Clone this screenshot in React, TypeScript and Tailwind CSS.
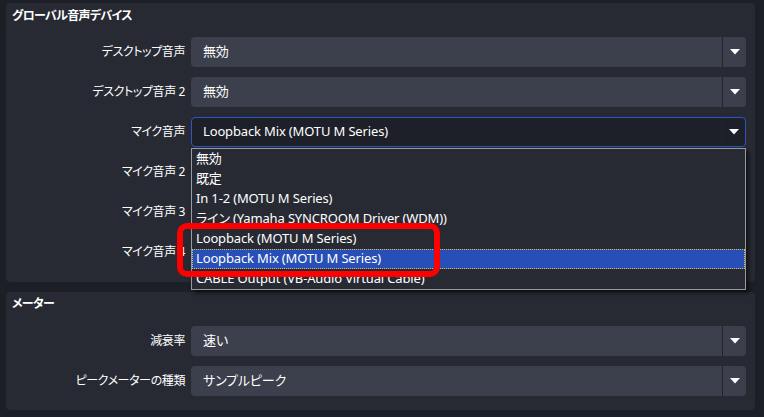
import React from 'react';

const font = "font-['Noto_Sans','Noto_Sans_CJK_JP',sans-serif] [font-feature-settings:'palt']";

interface ComboProps {
  value: string;
  focused?: boolean;
}

const Arrow = () => (
  <svg width="10" height="6" viewBox="0 0 10 6" className="block">
    <path d="M0 0 H10 L5 5.5 Z" fill="#ffffff" />
  </svg>
);

const Combo: React.FC<ComboProps> = ({ value, focused }) => (
  <div
    className={`h-[30px] flex rounded-[4px] ${
      focused ? 'bg-[#1e2029] border border-[#2d56c4]' : 'bg-[#3c404c]'
    }`}
  >
    <div className={`flex-1 flex items-center ${focused ? 'pl-[11px]' : 'pl-[12px]'} text-white`}>{value}</div>
    <div className="w-[24px] flex items-center justify-center border-l border-[#22242c]">
      <Arrow />
    </div>
  </div>
);

const Row: React.FC<{ label: string; value: string; focused?: boolean }> = ({ label, value, focused }) => (
  <div className="flex items-center h-[30px]">
    <div className="w-[185px] pr-[6px] text-right text-white whitespace-nowrap text-[12px] tracking-[-0.4px]">{label}</div>
    <div className="flex-1 pr-[9px]">
      <Combo value={value} focused={focused} />
    </div>
  </div>
);

const items = [
  '無効',
  '既定',
  'In 1-2 (MOTU M Series)',
  'ライン (Yamaha SYNCROOM Driver (WDM))',
  'Loopback (MOTU M Series)',
  'Loopback Mix (MOTU M Series)',
  'CABLE Output (VB-Audio Virtual Cable)',
];

export default function App() {
  return (
    <div className={`w-[764px] h-[417px] bg-[#1d1f26] overflow-hidden relative text-[13px] tracking-[-0.15px] ${font}`}>
      <div className="pl-[6px] pr-[9px] pt-[3px] flex flex-col gap-[10px]">
        {/* グローバル音声デバイス */}
        <div className="bg-[#272a33] rounded-[4px] h-[279px] flex flex-col">
          <div className="h-[26px] pl-[6px] flex items-center text-white font-semibold text-[12px] tracking-[-0.7px]">グローバル音声デバイス</div>
          <div className="mt-[8px] flex flex-col gap-[10px]">
            <Row label="デスクトップ音声" value="無効" />
            <Row label="デスクトップ音声 2" value="無効" />
            <Row label="マイク音声" value="Loopback Mix (MOTU M Series)" focused />
            {/* these three sit under the open list, their values are hidden */}
            <Row label="マイク音声 2" value="" />
            <Row label="マイク音声 3" value="" />
            <Row label="マイク音声 4" value="" />
          </div>
        </div>

        {/* メーター */}
        <div className="bg-[#272a33] rounded-[4px] h-[118px] flex flex-col">
          <div className="h-[24px] pl-[6px] flex items-center text-white font-semibold text-[12px] tracking-[-0.7px]">メーター</div>
          <div className="mt-[10px] flex flex-col gap-[10px]">
            <Row label="減衰率" value="速い" />
            <Row label="ピークメーターの種類" value="サンプルピーク" />
          </div>
        </div>
      </div>

      {/* open dropdown list */}
      <div className="absolute left-[191px] top-[148px] w-[555px] h-[142px] bg-[#272a33] border border-[#9a9a9e] shadow-[3px_3px_4px_rgba(0,0,0,0.55)] overflow-hidden">
        {items.map((it, i) => (
          <div
            key={it}
            className={`h-[20px] flex items-center pl-[4px] text-white whitespace-nowrap ${
              i === 5 ? 'bg-[#284eb8] outline-1 outline-dotted outline-[#e0c04a] -outline-offset-1' : ''
            }`}
          >
            {it}
          </div>
        ))}
      </div>

      {/* annotation */}
      <div className="absolute left-[177px] top-[223px] w-[263px] h-[54px] border-[6px] border-[#ff0000] rounded-[10px]" />
    </div>
  );
}
